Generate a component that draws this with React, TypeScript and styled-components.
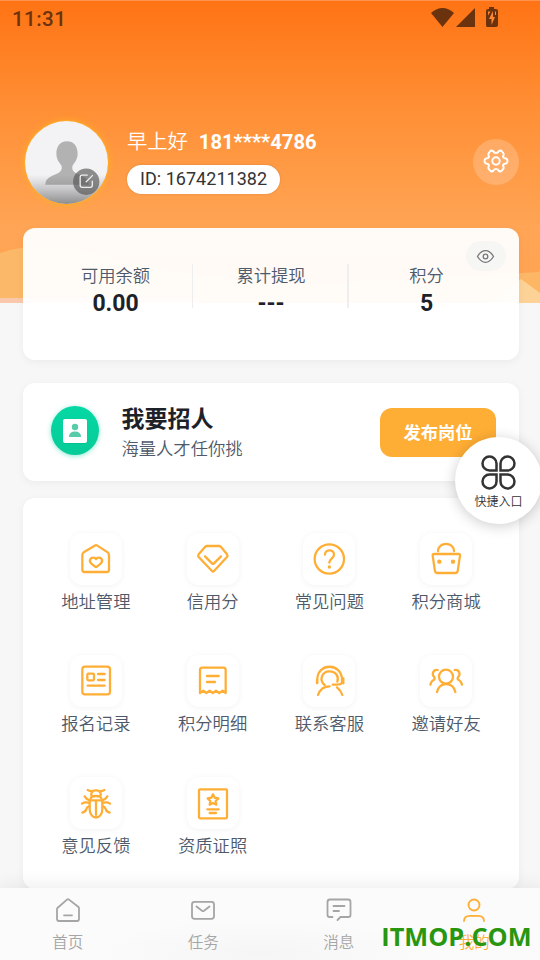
import React from "react";
import styled, { createGlobalStyle } from "styled-components";

const GlobalStyle = createGlobalStyle`
  * { box-sizing: border-box; }
  body {
    margin: 0;
    background: #f6f6f6;
    font-family: Roboto, "Noto Sans CJK SC", sans-serif;
    color: #4e5969;
  }
`;

const Screen = styled.div`
  position: relative;
  width: 540px;
  height: 960px;
  overflow: hidden;
  display: flex;
  flex-direction: column;
  background: #f7f7f7;
`;

const Backdrop = styled.svg`
  position: absolute;
  left: 0;
  top: 0;
  width: 540px;
  height: 303px;
`;

const Content = styled.main`
  position: relative;
  height: 888px;
  overflow: hidden;
  display: flex;
  flex-direction: column;
`;

const StatusBar = styled.div`
  height: 38px;
  flex: none;
  display: flex;
  justify-content: space-between;
  padding: 0 41px 0 12px;
  color: #6b330d;
  font-size: 20.6px;
  line-height: 38px;
  font-weight: 500;
  letter-spacing: 0.4px;
`;

const Profile = styled.section`
  height: 86px;
  margin: 81px 21px 0 24px;
  flex: none;
  display: flex;
  align-items: center;
`;

const Avatar = styled.div`
  position: relative;
  width: 85px;
  height: 85px;
  border: 1px solid #ffad25;
  border-radius: 50%;
  box-shadow: 0 0 6px rgba(255, 180, 30, 0.7);
  overflow: hidden;
  svg { display: block; }
`;

const Identity = styled.div`
  margin-left: 18px;
  flex: 1;
  display: flex;
  flex-direction: column;
  align-items: flex-start;
`;

const Greeting = styled.div`
  height: 34px;
  margin-top: -6px;
  display: flex;
  align-items: center;
  gap: 11px;
  color: #fff;
  font-size: 20.3px;
  line-height: 34px;
  font-weight: 350;
  strong { font-weight: 700; font-size: 20.2px; }
`;

const IdPill = styled.div`
  height: 29px;
  margin-top: 6px;
  padding: 0 13px;
  border-radius: 15px;
  background: #fff;
  box-shadow: 0 0 2px rgba(120, 80, 40, 0.35);
  color: #333;
  font-size: 18px;
  line-height: 28px;
  letter-spacing: 0.03px;
`;

const SettingsButton = styled.button`
  width: 46px;
  height: 46px;
  padding: 0;
  border: 0;
  border-radius: 50%;
  background: rgba(255, 255, 255, 0.2);
`;

const Card = styled.section`
  margin: 0 21px 0 23px;
  flex: none;
  border-radius: 12px;
  background: #fff;
  box-shadow: 0 2px 9px rgba(0, 0, 0, 0.05);
`;

const BalanceCard = styled(Card)`
  position: relative;
  height: 132px;
  margin-top: 23px;
  padding: 36px 0 0 14.5px;
  display: flex;
  background: rgba(255, 255, 255, 0.95);
`;

const Stat = styled.div<{ $divider: number }>`
  width: 155.5px;
  height: 44px;
  padding-left: ${(p) => p.$divider + 0.6}px;
  border-right: ${(p) => p.$divider}px solid #eeeeef;
  display: flex;
  flex-direction: column;
  align-items: center;
`;

const StatLabel = styled.span`
  height: 26px;
  font-size: 17.3px;
  line-height: 25px;
  font-weight: 350;
`;

const StatValue = styled.span`
  color: #1d2129;
  font-size: 23px;
  line-height: 27px;
  padding-top: 1px;
  font-weight: 700;
`;

const EyeButton = styled.button`
  position: absolute;
  right: 13px;
  top: 13px;
  width: 40px;
  height: 30px;
  padding: 0;
  border: 0;
  border-radius: 15px;
  background: #f6f6f5;
`;

const HireCard = styled(Card)`
  height: 98px;
  margin-top: 23px;
  padding: 0 23px 0 28px;
  display: flex;
  align-items: center;
`;

const HireBadge = styled.div`
  width: 48px;
  height: 49px;
  margin-bottom: 3px;
  border-radius: 50%;
  background: linear-gradient(#05d8a4, #07cb98);
  box-shadow: 0 1px 5px rgba(5, 205, 155, 0.45);
`;

const HireText = styled.div`
  margin: 4px 0 0 22.5px;
  flex: 1;
  display: flex;
  flex-direction: column;
`;

const HireTitle = styled.h2`
  margin: 0;
  color: #1d2129;
  font-size: 23px;
  line-height: 31px;
  font-weight: 700;
`;

const HireNote = styled.span`
  color: #4e5969;
  font-size: 17.3px;
  line-height: 29px;
  font-weight: 350;
`;

const PostButton = styled.button`
  width: 116px;
  height: 49px;
  padding: 0 0 2px;
  border: 0;
  border-radius: 12px;
  background: #ffae35;
  color: #fff;
  font: 700 17.3px/47px "Noto Sans CJK SC", sans-serif;
`;

const MenuCard = styled(Card)`
  height: 391px;
  margin-top: 17px;
  padding: 35px 14.5px 0;
  display: grid;
  grid-template-columns: repeat(4, 1fr);
  grid-auto-rows: 122px;
`;

const MenuItem = styled.div`
  display: flex;
  flex-direction: column;
  align-items: center;
`;

const IconTile = styled.div`
  width: 52px;
  height: 52px;
  border-radius: 12px;
  background: #fff;
  box-shadow: 0 1px 6px rgba(0, 0, 0, 0.05);
  svg { display: block; }
`;

const MenuLabel = styled.span`
  margin-top: 4px;
  font-size: 17.3px;
  line-height: 26px;
  font-weight: 350;
`;

const QuickEntry = styled.button`
  position: absolute;
  left: 455px;
  top: 437px;
  width: 87px;
  height: 87px;
  padding: 17px 0 0;
  border: 0;
  border-radius: 50%;
  background: #fff;
  box-shadow: 0 2px 14px rgba(0, 0, 0, 0.2);
  display: flex;
  flex-direction: column;
  align-items: center;
  color: #333;
  font: 350 12px/20px "Noto Sans CJK SC", sans-serif;
  svg { margin-left: -1px; }
`;

const TabBar = styled.nav`
  position: relative;
  width: 542px;
  height: 72px;
  display: grid;
  grid-template-columns: repeat(4, 1fr);
  background: radial-gradient(ellipse 170px 34px at 260px 66px, #f5f5f5, #fbfbfb);
  box-shadow: 0 0 20px rgba(0, 0, 0, 0.09);
`;

const Tab = styled.div<{ $active?: boolean }>`
  padding-top: 8px;
  display: flex;
  flex-direction: column;
  align-items: center;
  color: ${(p) => (p.$active ? "#ffae35" : "#a5a5a5")};
  font-size: 15.5px;
  line-height: 24px;
  font-weight: 350;
  svg { display: block; margin-bottom: 7px; }
`;

const Watermark = styled.div`
  position: absolute;
  right: 8.5px;
  bottom: 6px;
  color: #28960f;
  font: 700 25.3px/36px "Open Sans", "Noto Sans", sans-serif;
`;

/* Menu glyphs share a 156-unit grid that covers the whole 52px tile. */
const Glyph = ({ children }: { children: React.ReactNode }) => (
  <svg
    width="52"
    height="52"
    viewBox="0 0 156 156"
    fill="none"
    stroke="#ffae35"
    strokeWidth="6.8"
    strokeLinecap="round"
    strokeLinejoin="round"
  >
    {children}
  </svg>
);

const menu: { label: string; glyph: React.ReactNode }[] = [
  {
    label: "地址管理",
    glyph: (
      <>
        <path d="M37 66Q37 61 41 58L74 38Q78 35 82 38L113 58Q117 61 117 66V110Q117 117 110 117H44Q37 117 37 110Z" />
        <path d="M78 78C74 72 66 73 62 77C58 82 60 88 64 92L75 101Q78 103 81 101L92 92C96 88 98 82 94 77C90 73 82 72 78 78Z" />
      </>
    ),
  },
  {
    label: "信用分",
    glyph: (
      <>
        <path d="M59 39H97Q100 39 102 42L120 64Q123 68 120 72L81 114Q78 117 75 114L35 72Q32 68 35 64L54 42Q56 39 59 39Z" />
        <path d="M54 70L75 91Q78 94 81 91L102 70" />
      </>
    ),
  },
  {
    label: "常见问题",
    glyph: (
      <>
        <circle cx="79" cy="78" r="44" />
        <path d="M66 65C66 48 93 48 93 65C93 76 80 76 79 89" />
        <circle cx="79" cy="102" r="5" fill="#ffae35" stroke="none" />
      </>
    ),
  },
  {
    label: "积分商城",
    glyph: (
      <>
        <path d="M54 55C55 25 101 25 102 55" />
        <path d="M42 63H116Q121 63 120 68L113 115Q112 120 107 120H51Q46 120 45 115L38 68Q37 63 42 63Z" />
        <circle cx="58" cy="86" r="6.5" fill="#ffae35" stroke="none" />
        <circle cx="99" cy="86" r="6.5" fill="#ffae35" stroke="none" />
      </>
    ),
  },
  {
    label: "报名记录",
    glyph: (
      <>
        <rect x="37" y="35" width="83" height="83" rx="8" />
        <rect x="52" y="56" width="20" height="20" rx="3" />
        <path d="M84 57H104M84 75H104M53 92H104" />
      </>
    ),
  },
  {
    label: "积分明细",
    glyph: (
      <>
        <path d="M39 114V45Q39 38 46 38H109Q116 38 116 45V114L107 107L96.500 114L87 107L77.500 114L68 107L58 114L49 107Z" />
        <path d="M60 63H95M60 81H84" />
      </>
    ),
  },
  {
    label: "联系客服",
    glyph: (
      <>
        <path d="M43 84V72C44 23 115 23 117 72V84M42 74V85M121 70V85" />
        <path d="M65 90C47 76 57 49 79 49C99 49 108 64 103 80" />
        <path d="M118 83Q113 89 101 89H89" />
        <path d="M45 120Q54 94 80 94M102 97Q114 107 118 120" />
      </>
    ),
  },
  {
    label: "邀请好友",
    glyph: (
      <>
        <circle cx="78" cy="65" r="21" />
        <path d="M51 111C58 79 99 79 106 111" />
        <path d="M53 45C39 43 34 58 43 67Q46 72 41 75Q34 78 31 89" />
        <path d="M104 45C118 43 123 58 114 67Q111 72 116 75Q123 78 126 89" />
      </>
    ),
  },
  {
    label: "意见反馈",
    glyph: (
      <>
        <path d="M59 70H97V96C97 130 59 130 59 96ZM78 72V114" />
        <path d="M62 65Q62 57 78 57Q94 57 94 65M64 55Q63 46 69 43M92 55Q93 46 87 43M53 39Q61 43 67 42Q78 38 89 42Q95 43 103 39" />
        <path d="M44 58Q50 68 59 70M112 58Q106 68 97 70M36 80Q45 74 58 78M120 80Q111 74 98 78M37 107Q48 103 49 96Q51 89 58 88M119 107Q108 103 107 96Q105 89 98 88" />
      </>
    ),
  },
  {
    label: "资质证照",
    glyph: (
      <>
        <rect x="36" y="37" width="84" height="87" rx="3" />
        <path d="M78 52L83 62L94 64L86 72L88 83L78 78L68 83L70 72L62 64L73 62Z" />
        <path d="M61 97H95M68 108H87" />
      </>
    ),
  },
];

const tabs: { label: string; active?: boolean; glyph: React.ReactNode }[] = [
  {
    label: "首页",
    glyph: <path d="M3.4 12L13 3.6Q14 2.8 15 3.6L24.5 11Q25 11.5 25 12.5V23Q25 25 23 25H5Q3 25 3 23V13Q3 12.3 3.4 12ZM10 19.3H18" />,
  },
  {
    label: "任务",
    glyph: (
      <>
        <rect x="3" y="5.8" width="22" height="17" rx="2.5" />
        <path d="M7.5 10.500L13 14.800Q14 15.500 15 14.800L20.5 10.500" />
      </>
    ),
  },
  {
    label: "消息",
    glyph: (
      <>
        <path d="M7.500 21H4.500Q2.500 21 2.500 19V6Q2.500 3.500 5 3.500H23Q25.500 3.500 25.500 6V19Q25.500 21 23.500 21H15.500L12.500 24" />
        <path d="M8.500 10H19.500M8.500 15H14" />
      </>
    ),
  },
  {
    label: "我的",
    active: true,
    glyph: (
      <>
        <circle cx="14" cy="9" r="5.500" />
        <path d="M4 25Q4 19.800 10 19.800H18Q24 19.800 24 25" />
      </>
    ),
  },
];

const HeaderArt = () => (
  <Backdrop viewBox="0 0 540 303" preserveAspectRatio="none">
    <defs>
      <linearGradient id="sky" x1="0" y1="0" x2="0" y2="1">
        <stop offset="0" stopColor="#ff7314" />
        <stop offset="0.37" stopColor="#ff9036" />
        <stop offset="0.75" stopColor="#ffa555" />
        <stop offset="1" stopColor="#ffa350" />
      </linearGradient>
    </defs>
    <rect width="540" height="303" fill="url(#sky)" />
    <rect width="540" height="1" fill="#ff934e" />
    <path d="M0 253Q45 238 110 258T300 285L540 272V303H0Z" fill="#fcb869" />
    <path d="M519 282L540 271V303H500Z" fill="#fdb664" />
    <path d="M490 303L521 279L540 293V303Z" fill="#fcd296" />
    <rect y="298" width="200" height="5" fill="#fac9ac" />
  </Backdrop>
);

const StatusIcons = () => (
  <svg width="70" height="37" viewBox="0 0 70 37" fill="#6b330d">
    <path d="M2 13Q13.500 3 25 13L13.500 27Z" />
    <path d="M46 8V27H27Z" />
    <path d="M60 7H65V9H67Q69 9 69 11V25Q69 27 67 27H58Q57 27 57 25V11Q57 9 59 9H60Z" />
    <path d="M64 11L60 19H62.500V25L66 17H64Z" fill="#ff8734" />
    <path d="M59 11.500H61.500L59 15.500ZM67 11.500V15H66V11.500Z" fill="#ff8734" />
  </svg>
);

const AvatarArt = () => (
  <svg width="83" height="83" viewBox="0 0 82 82">
    <defs>
      <linearGradient id="shade" x1="0" y1="0" x2="0" y2="1">
        <stop offset="0" stopColor="#777" stopOpacity="0" />
        <stop offset="1" stopColor="#555" stopOpacity="0.65" />
      </linearGradient>
    </defs>
    <rect width="82" height="82" fill="#f3f3f6" />
    <path
      d="M41.500 20C34 20 31 26 31 32C31 38 34 41 36 44C38 51 31 52 27 54Q20 57 20 63H63Q63 57 56 54C52 52 45 51 47 44C49 41 52 38 52 32C52 26 49 20 41.500 20Z"
      fill="#b2b2b2"
    />
    <rect y="53" width="82" height="29" fill="url(#shade)" />
    <circle cx="60.500" cy="60" r="13" fill="#555" fillOpacity="0.65" />
    <path
      d="M62 53.500H56.500Q54.500 53.500 54.500 55.500V63.500Q54.500 65.500 56.500 65.500H64.500Q66.500 65.500 66.500 63.500V59M60 60.500L67 53.500"
      fill="none"
      stroke="#eee"
      strokeWidth="1.300"
    />
  </svg>
);

const GearIcon = () => (
  <svg width="46" height="46" viewBox="0 0 46 46" fill="none" stroke="#fff" strokeWidth="2" strokeLinejoin="round">
    <path d="M17 12.500Q18 11 20 12Q21 14 23 14Q25 14 26 12Q28 11 29 12.500L30.500 14.500Q31 16 30 17.500Q30.500 19.500 33 19.500Q34.500 20 34.500 22Q34.500 24 33 24.500Q30.500 24.500 30 26.500Q31 28 30.500 29.500L29 31.500Q28 33 26 32Q25 30 23 30Q21 30 20 32Q18 33 17 31.500L15.500 29.500Q15 28 16 26.500Q15.500 24.500 13 24.500Q11.500 24 11.500 22Q11.500 20 13 19.500Q15.500 19.500 16 17.500Q15 16 15.500 14.500Z" />
    <circle cx="23" cy="22" r="3.700" />
  </svg>
);

const EyeIcon = () => (
  <svg width="40" height="30" viewBox="0 0 40 30" fill="none" stroke="#777" strokeWidth="1.300">
    <path d="M11.500 15.500Q15 9.700 19.500 9.700T27.500 15.500Q24 21.300 19.500 21.300T11.500 15.500Z" />
    <circle cx="19.500" cy="15.500" r="2.300" />
  </svg>
);

const PersonCard = () => (
  <svg width="48" height="49" viewBox="0 0 48 49">
    <rect x="12.500" y="14" width="23" height="24" rx="2" fill="#08af84" opacity="0.45" />
    <rect x="12" y="13" width="24" height="24" rx="2" fill="#fff" />
    <circle cx="24" cy="21" r="3.200" fill="#58cbaa" />
    <path d="M18 31Q18 25.500 24 25.500T30 31Z" fill="#58cbaa" />
  </svg>
);

const CloverIcon = () => (
  <svg width="37" height="37" viewBox="0 0 37 37" fill="none" stroke="#333" strokeWidth="2.500">
    <path d="M16.500 16.500H9.500A7 7 0 1 1 16.500 9.500Z" />
    <path d="M20.500 16.500V9.500A7 7 0 1 1 27.500 16.500Z" />
    <path d="M16.500 20.500V27.500A7 7 0 1 1 9.500 20.500Z" />
    <path d="M20.500 20.500H27.500A7 7 0 1 1 20.500 27.500Z" />
  </svg>
);

export default function App() {
  return (
    <>
      <GlobalStyle />
      <Screen>
        <HeaderArt />
        <Content>
          <StatusBar>
            <span>11:31</span>
            <StatusIcons />
          </StatusBar>
          <Profile>
            <Avatar>
              <AvatarArt />
            </Avatar>
            <Identity>
              <Greeting>
                <span>早上好</span>
                <strong>181****4786</strong>
              </Greeting>
              <IdPill>ID: 1674211382</IdPill>
            </Identity>
            <SettingsButton aria-label="设置">
              <GearIcon />
            </SettingsButton>
          </Profile>
          <BalanceCard>
            <Stat $divider={1}>
              <StatLabel>可用余额</StatLabel>
              <StatValue>0.00</StatValue>
            </Stat>
            <Stat $divider={2}>
              <StatLabel>累计提现</StatLabel>
              <StatValue>---</StatValue>
            </Stat>
            <Stat $divider={0}>
              <StatLabel>积分</StatLabel>
              <StatValue>5</StatValue>
            </Stat>
            <EyeButton aria-label="显示余额">
              <EyeIcon />
            </EyeButton>
          </BalanceCard>
          <HireCard>
            <HireBadge>
              <PersonCard />
            </HireBadge>
            <HireText>
              <HireTitle>我要招人</HireTitle>
              <HireNote>海量人才任你挑</HireNote>
            </HireText>
            <PostButton>发布岗位</PostButton>
          </HireCard>
          <MenuCard>
            {menu.map((item) => (
              <MenuItem key={item.label}>
                <IconTile>
                  <Glyph>{item.glyph}</Glyph>
                </IconTile>
                <MenuLabel>{item.label}</MenuLabel>
              </MenuItem>
            ))}
          </MenuCard>
        </Content>
        <TabBar>
          {tabs.map((tab) => (
            <Tab key={tab.label} $active={tab.active}>
              <svg
                width="28"
                height="28"
                viewBox="0 0 28 28"
                fill="none"
                stroke="currentColor"
                strokeWidth="1.800"
                strokeLinecap="round"
                strokeLinejoin="round"
              >
                {tab.glyph}
              </svg>
              <span>{tab.label}</span>
            </Tab>
          ))}
        </TabBar>
        <QuickEntry>
          <CloverIcon />
          <span>快捷入口</span>
        </QuickEntry>
        <Watermark>ITMOP.COM</Watermark>
      </Screen>
    </>
  );
}
